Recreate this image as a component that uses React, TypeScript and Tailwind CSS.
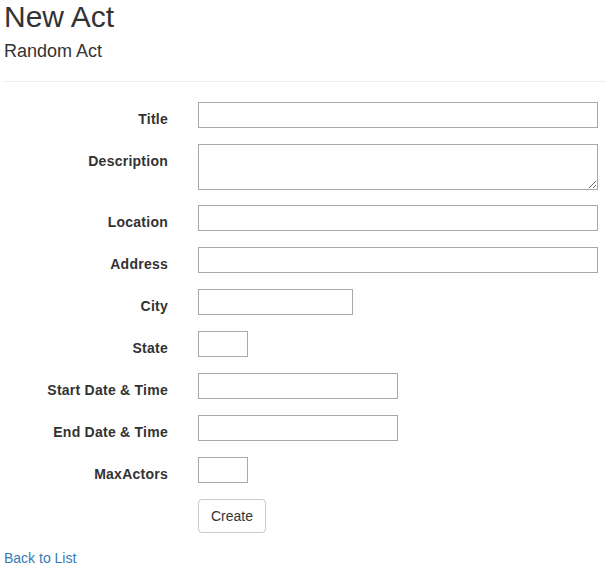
const fields: { label: string; width: string; kind?: "textarea" }[] = [
  { label: "Title", width: "w-[400px]" },
  { label: "Description", width: "w-[400px]", kind: "textarea" },
  { label: "Location", width: "w-[400px]" },
  { label: "Address", width: "w-[400px]" },
  { label: "City", width: "w-[155px]" },
  { label: "State", width: "w-[50px]" },
  { label: "Start Date & Time", width: "w-[200px]" },
  { label: "End Date & Time", width: "w-[200px]" },
  { label: "MaxActors", width: "w-[50px]" },
];

export default function App() {
  return (
    <div className="min-h-[580px] w-[606px] bg-white pl-[4px] font-['Liberation_Sans',Arial,sans-serif] text-[14px] leading-[20px] text-[#333]">
      <h2 className="text-[30px] leading-[33px]">New Act</h2>
      <h4 className="mt-[8px] text-[18px] leading-[20px]">Random Act</h4>
      <hr className="-ml-[1px] mt-[20px] border-t border-[#eee]" />

      <form className="mt-[20px]" onSubmit={(e) => e.preventDefault()}>
        {fields.map((field) => (
          <div key={field.label} className="mb-[15px] flex items-start">
            <label className="w-[164px] shrink-0 pt-[7px] text-right font-bold tracking-[0.25px]">{field.label}</label>
            <div className="ml-[30px]">
              {field.kind === "textarea" ? (
                <textarea className={`block h-[46px] ${field.width} border border-[#a9a9a9] bg-white`} />
              ) : (
                <input type="text" className={`block h-[26px] ${field.width} border border-[#a9a9a9] bg-white`} />
              )}
            </div>
          </div>
        ))}
        <div className="mb-[15px] flex">
          <div className="ml-[194px]">
            <button
              type="submit"
              className="rounded-[4px] border border-[#ccc] bg-white px-[12px] py-[6px] text-[14px] leading-[20px] text-[#333]"
            >
              Create
            </button>
          </div>
        </div>
      </form>

      <a href="#" className="text-[#337ab7]">
        Back to List
      </a>
    </div>
  );
}
